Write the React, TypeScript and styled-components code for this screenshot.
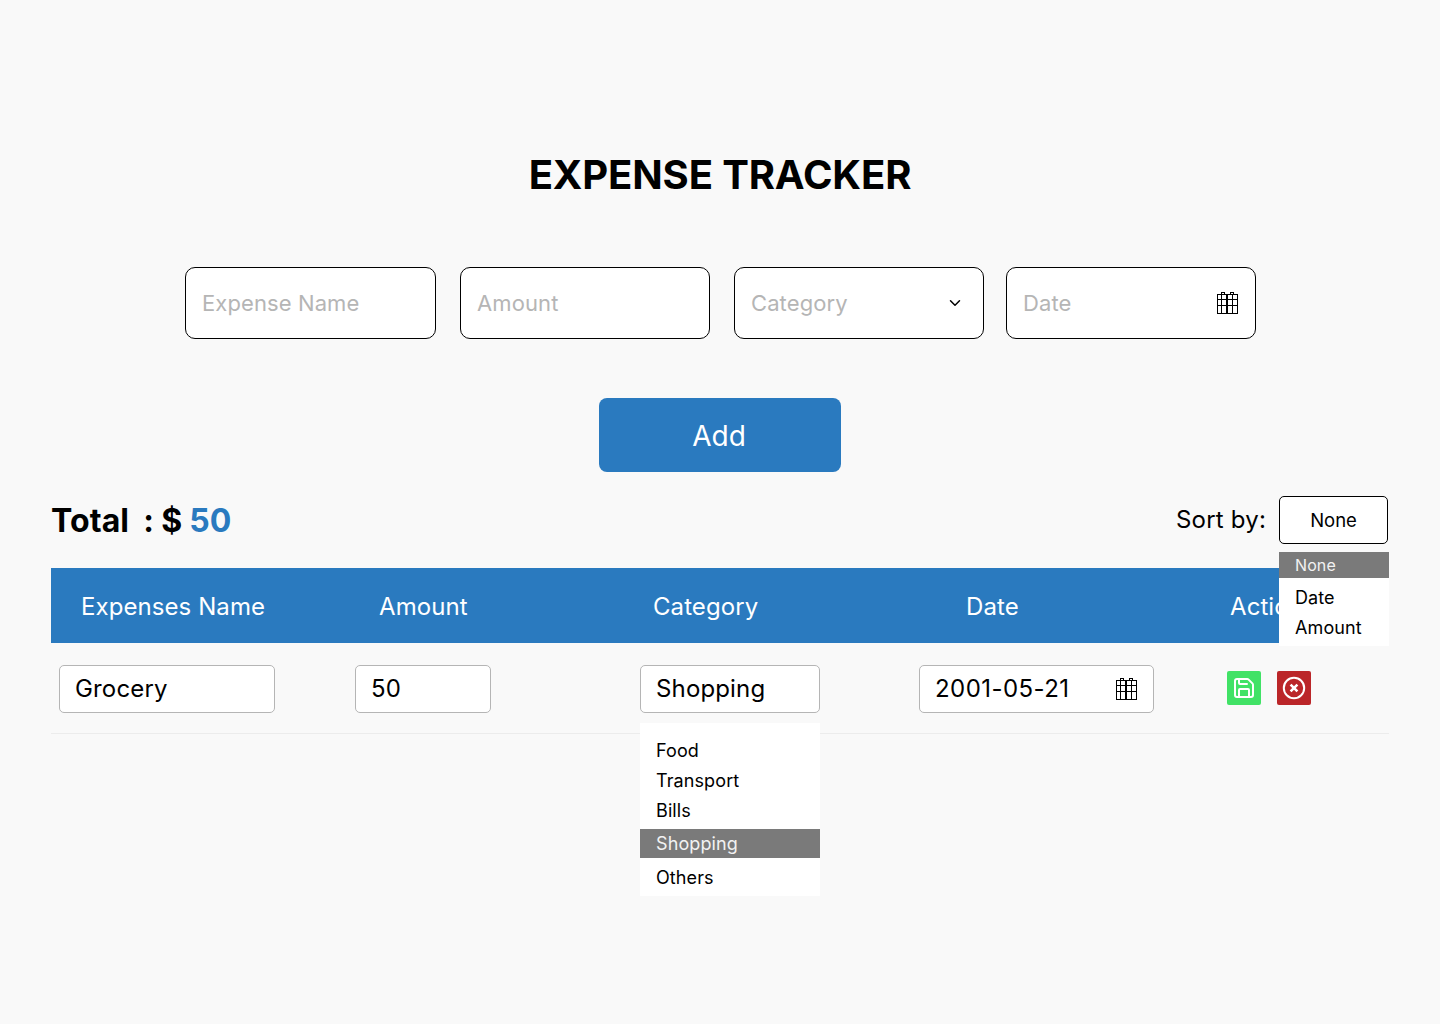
import React from 'react'
import styled, { createGlobalStyle } from 'styled-components'
import { ChevronDown, Save } from 'lucide-react'

const GlobalStyle = createGlobalStyle`
  html, body {
    margin: 0;
    padding: 0;
    background: #f9f9f9;
    font-family: Inter, "Liberation Sans", sans-serif;
    color: #000;
  }
  * {
    box-sizing: border-box;
  }
`

const Page = styled.div`
  width: 1440px;
  height: 1024px;
  padding: 150px 51px 0;
  overflow: hidden;
`

const Title = styled.h1`
  margin: 0;
  font-size: 40px;
  line-height: 50px;
  font-weight: 700;
  letter-spacing: -0.13px;
  text-align: center;
`

const Form = styled.form`
  display: flex;
  margin: 67px 0 0 134px;
`

const Field = styled.div<{ $width: number; $gap: number }>`
  width: ${({ $width }) => $width}px;
  height: 72px;
  margin-right: ${({ $gap }) => $gap}px;
  padding: 0 16px;
  display: flex;
  align-items: center;
  justify-content: space-between;
  background: #fff;
  border: 1px solid #000;
  border-radius: 10px;
  font-size: 22px;
  letter-spacing: 0.1px;
  color: #b5b5b5;
`

const FieldInput = styled.input`
  width: 100%;
  border: 0;
  outline: 0;
  padding: 0;
  background: transparent;
  font: inherit;
  letter-spacing: inherit;

  &::placeholder {
    color: #b5b5b5;
    opacity: 1;
  }
`

const Chevron = styled(ChevronDown)`
  flex-shrink: 0;
  margin-right: 3px;
`

const AddButton = styled.button`
  display: block;
  width: 242px;
  height: 74px;
  margin: 59px auto 0;
  padding: 1px 2px 0 0;
  border: 0;
  border-radius: 8px;
  background: #2a7abf;
  color: #fff;
  font-family: inherit;
  font-size: 28px;
`

const Summary = styled.div`
  height: 48px;
  margin-top: 24px;
  display: flex;
  align-items: center;
  justify-content: space-between;
`

const Total = styled.div`
  padding-top: 1px;
  font-size: 32px;
  font-weight: 700;
  letter-spacing: 0.1px;
  word-spacing: -0.6px;
  white-space: pre;
`

const TotalValue = styled.span`
  color: #2a7abf;
`

const Sort = styled.div`
  position: relative;
  display: flex;
  align-items: center;
  gap: 13px;
  margin-right: 1px;
  font-size: 24px;
`

const SortLabel = styled.span`
  margin-top: -2px;
  letter-spacing: 0.2px;
`

const SortBox = styled.div`
  width: 109px;
  height: 48px;
  display: flex;
  align-items: center;
  justify-content: center;
  background: #fff;
  border: 1px solid #000;
  border-radius: 5px;
  font-size: 18.5px;
`

const Options = styled.ul<{ $top: number; $width: number; $padTop: number; $padBottom: number }>`
  position: absolute;
  z-index: 2;
  top: ${({ $top }) => $top}px;
  width: ${({ $width }) => $width}px;
  margin: 0;
  padding: ${({ $padTop }) => $padTop}px 0 ${({ $padBottom }) => $padBottom}px;
  list-style: none;
  background: #fff;
`

const SortOptions = styled(Options)`
  right: -1px;
`

const CategoryOptions = styled(Options)`
  left: 0;
`

const Option = styled.li<{ $height: number; $selected?: boolean; $before?: number; $size?: number }>`
  height: ${({ $height }) => $height}px;
  margin-top: ${({ $before }) => $before ?? 0}px;
  padding-left: 16px;
  display: flex;
  align-items: center;
  background: ${({ $selected }) => ($selected ? '#7a7a7a' : 'transparent')};
  color: ${({ $selected }) => ($selected ? '#f2f2f2' : '#000')};
  font-size: ${({ $size }) => $size ?? 18}px;
  letter-spacing: 0.1px;
`

const TableHead = styled.div`
  height: 75px;
  margin-top: 24px;
  padding: 2px 0 0 30px;
  display: grid;
  grid-template-columns: 298px 274px 313px 264px 1fr;
  align-items: center;
  background: #2a7abf;
  color: #fff;
  font-size: 24px;
  letter-spacing: 0.08px;
`

const TableRow = styled.div`
  height: 91px;
  padding: 22px 0 0 8px;
  display: grid;
  grid-template-columns: 296px 285px 279px 308px 1fr;
  align-items: start;
  border-bottom: 1px solid #ececec;
`

const CellBox = styled.div`
  position: relative;
`

const CellInput = styled.div<{ $width: number; $spacing?: number }>`
  width: ${({ $width }) => $width}px;
  height: 48px;
  padding: 0 15px 2px;
  display: flex;
  align-items: center;
  justify-content: space-between;
  background: #fff;
  border: 1px solid #b5b5b5;
  border-radius: 5px;
  font-size: 24px;
  letter-spacing: ${({ $spacing }) => $spacing ?? 0.15}px;
`

const Actions = styled.div`
  display: flex;
  gap: 16px;
  padding-top: 6px;
`

const ActionButton = styled.button<{ $color: string }>`
  width: 34px;
  height: 34px;
  padding: 0;
  display: flex;
  align-items: center;
  justify-content: center;
  border: 0;
  border-radius: 2px;
  background: ${({ $color }) => $color};
  color: #fff;
`

const CalendarSvg = styled.svg<{ $offset: number }>`
  flex-shrink: 0;
  margin-top: ${({ $offset }) => $offset}px;
`

const CalendarIcon = ({ offset = 0 }: { offset?: number }) => (
  <CalendarSvg $offset={offset} width="23" height="23" viewBox="0 0 23 23" fill="none" stroke="#000" strokeWidth="1" shapeRendering="crispEdges">
    <path d="M2.5 2.5h18a1 1 0 0 1 1 1v17a1 1 0 0 1-1 1h-18a1 1 0 0 1-1-1v-17a1 1 0 0 1 1-1z" />
    <path d="M1.5 7.5h20M1.5 13.5h20M5.5 3v18M10.5 3v18M11.5 3v18M16.5 3v18" />
    <path d="M5.5 3V1.5a1 1 0 0 1 1-1h1a1 1 0 0 1 1 1V3M14.5 3V1.5a1 1 0 0 1 1-1h1a1 1 0 0 1 1 1V3" />
  </CalendarSvg>
)

const CloseIcon = () => (
  <svg width="26" height="26" viewBox="0 0 26 26" fill="none" stroke="currentColor">
    <circle cx="13" cy="13" r="10.2" strokeWidth="2" />
    <path d="M9.6 9.6l6.8 6.8M16.4 9.6l-6.8 6.8" strokeWidth="2.6" />
  </svg>
)

const App = () => (
  <Page>
    <GlobalStyle />
    <Title>EXPENSE TRACKER</Title>
    <Form>
      <Field $width={251} $gap={24}>
        <FieldInput placeholder="Expense Name" readOnly />
      </Field>
      <Field $width={250} $gap={24}>
        <FieldInput placeholder="Amount" readOnly />
      </Field>
      <Field $width={250} $gap={22}>
        <FieldInput placeholder="Category" readOnly />
        <Chevron size={18} color="#000" />
      </Field>
      <Field $width={250} $gap={0}>
        <FieldInput placeholder="Date" readOnly />
        <CalendarIcon />
      </Field>
    </Form>
    <AddButton type="button">Add</AddButton>
    <Summary>
      <Total>
        Total  : $ <TotalValue>50</TotalValue>
      </Total>
      <Sort>
        <SortLabel>Sort by:</SortLabel>
        <SortBox>None</SortBox>
        <SortOptions $top={56} $width={110} $padTop={0} $padBottom={4}>
          <Option $height={26} $selected $size={16}>None</Option>
          <Option $height={30} $before={4}>Date</Option>
          <Option $height={30}>Amount</Option>
        </SortOptions>
      </Sort>
    </Summary>
    <TableHead>
      <span>Expenses Name</span>
      <span>Amount</span>
      <span>Category</span>
      <span>Date</span>
      <span>Action</span>
    </TableHead>
    <TableRow>
      <CellInput $width={216}>Grocery</CellInput>
      <CellInput $width={136}>50</CellInput>
      <CellBox>
        <CellInput $width={180}>Shopping</CellInput>
        <CategoryOptions $top={58} $width={180} $padTop={12} $padBottom={0}>
          <Option $height={30}>Food</Option>
          <Option $height={30}>Transport</Option>
          <Option $height={30}>Bills</Option>
          <Option $height={29} $selected $before={4}>Shopping</Option>
          <Option $height={38}>Others</Option>
        </CategoryOptions>
      </CellBox>
      <CellInput $width={235} $spacing={0.45}>
        2001-05-21
        <CalendarIcon offset={2} />
      </CellInput>
      <Actions>
        <ActionButton $color="#41e266" type="button">
          <Save size={24} strokeWidth={2} />
        </ActionButton>
        <ActionButton $color="#bb2629" type="button">
          <CloseIcon />
        </ActionButton>
      </Actions>
    </TableRow>
  </Page>
)

export default App
